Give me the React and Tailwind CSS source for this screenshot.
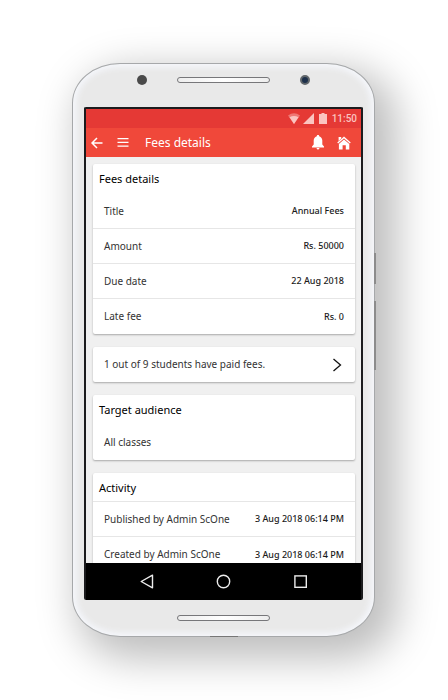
const feeRows = [
  ["Title", "Annual Fees"],
  ["Amount", "Rs. 50000"],
  ["Due date", "22 Aug 2018"],
  ["Late fee", "Rs. 0"],
];

const activityRows = [
  ["Published by Admin ScOne", "3 Aug 2018 06:14 PM"],
  ["Created by Admin ScOne", "3 Aug 2018 06:14 PM"],
];

function Rows({ items }) {
  return (
    <dl>
      {items.map(([label, value]) => (
        <div
          key={label}
          className="flex h-[35px] items-center justify-between border-b border-[#e6e6e6] px-[11px] last:border-b-0"
        >
          <dt className="text-[10px] text-[#333333]">{label}</dt>
          <dd className="text-[9px] font-medium text-[#1a1a1a]">{value}</dd>
        </div>
      ))}
    </dl>
  );
}

function Card({ children }) {
  return (
    <section className="shrink-0 rounded-xs bg-white shadow-[0_1px_2px_rgba(0,0,0,0.3)]">
      {children}
    </section>
  );
}

function CardTitle({ children }) {
  return (
    <h2 className="flex h-[30px] items-center px-[6px] text-[11px] text-black">{children}</h2>
  );
}

function StatusBar() {
  return (
    <div className="flex h-[19px] items-center justify-end gap-[3px] bg-[#e53935] pr-[4px] text-[#fbc4c0]">
      <svg width="12" height="11" viewBox="0 0 12 11" aria-hidden="true">
        <path d="M0 2.500Q6-2 12 2.500L6 11Z" fill="currentColor" opacity=".45" />
        <path d="M1.500 4.200Q6 1.600 10.500 4.200L6 11Z" fill="currentColor" />
      </svg>
      <svg width="11" height="11" viewBox="0 0 11 11" aria-hidden="true">
        <path d="M11 0V11H0Z" fill="currentColor" />
      </svg>
      <svg className="mx-[2px]" width="8" height="11" viewBox="0 0 8 11" aria-hidden="true">
        <path d="M2.500 0h3v1H8v10H0V1h2.500Z" fill="currentColor" />
      </svg>
      <time className="font-['Roboto',sans-serif] text-[10px] font-medium">11:50</time>
    </div>
  );
}

function AppBar() {
  return (
    <header className="flex h-[29px] items-center bg-[#f0483a] pr-[10px] pl-[5px] text-white">
      <button type="button" aria-label="Back">
        <svg width="12" height="12" viewBox="0 0 12 12" fill="none" stroke="currentColor" strokeWidth="1.500">
          <path d="M6 1L1 6L6 11M1 6H11.500" />
        </svg>
      </button>
      <button type="button" aria-label="Menu" className="ml-[14px]">
        <svg width="12" height="9" viewBox="0 0 12 9" fill="currentColor">
          <path d="M.5 0h11v1.200H.5zM.5 3.800h11v1.200H.5zM.5 7.500h11v1.200H.5z" />
        </svg>
      </button>
      <h1 className="ml-[16px] flex-1 text-[12px]">Fees details</h1>
      <button type="button" aria-label="Notifications">
        <svg width="12" height="15" viewBox="0 0 12 15" fill="currentColor">
          <path d="M6 0C6.900 0 7.200.6 7.200 1.200C9.300 1.800 10.300 3.600 10.300 5.500V9.500L12 11.600V12.500H0V11.600L1.700 9.500V5.500C1.700 3.600 2.700 1.800 4.800 1.200C4.800.6 5.100 0 6 0ZM4.500 13H7.500Q7.200 14.500 6 14.500Q4.800 14.500 4.500 13Z" />
        </svg>
      </button>
      <button type="button" aria-label="Home" className="ml-[13px]">
        <svg width="14" height="14" viewBox="0 0 14 14" fill="none">
          <path d="M7 3.400L12.300 8V13.500H8.800V9.300H5.600V13.500H1.900V8Z" fill="currentColor" />
          <path d="M.7 7L7 1.400L13.300 7" stroke="currentColor" strokeWidth="1.300" />
          <path d="M1.600 1H4.200V2.600L1.600 4.900Z" fill="currentColor" />
        </svg>
      </button>
    </header>
  );
}

function NavBar() {
  return (
    <nav className="flex h-[37px] shrink-0 items-center justify-center gap-[62px] bg-black text-[#ececec]">
      <button type="button" aria-label="Back">
        <svg width="15" height="15" viewBox="0 0 15 15" fill="none" stroke="currentColor" strokeWidth="1.400">
          <path d="M13.500 1.200V13.800L2.200 7.500Z" strokeLinejoin="round" />
        </svg>
      </button>
      <button type="button" aria-label="Home">
        <svg width="15" height="15" viewBox="0 0 15 15" fill="none" stroke="currentColor" strokeWidth="1.400">
          <circle cx="7.500" cy="7.500" r="6.200" />
        </svg>
      </button>
      <button type="button" aria-label="Recent apps">
        <svg width="15" height="15" viewBox="0 0 15 15" fill="none" stroke="currentColor" strokeWidth="1.400">
          <rect x="1.900" y="1.900" width="11.400" height="11.400" />
        </svg>
      </button>
    </nav>
  );
}

function Speaker() {
  return (
    <div className="h-[6px] w-[93px] rounded-full border border-[#77777a] bg-linear-to-r from-[#eeeeee] via-white to-[#eeeeee]" />
  );
}

export default function App() {
  return (
    <main className="min-h-screen overflow-hidden bg-white pt-[63px] pr-px pb-[63px] font-['Noto_Sans','Open_Sans',sans-serif]">
      <div className="relative mx-auto w-full max-w-[303px] rounded-[48px/40px] border border-[#a6a8aa] bg-[#e9e9e9] px-[11px] shadow-[inset_0_0_6px_3px_#f6f8fd,14px_14px_40px_8px_rgba(0,0,0,0.26)]">
        <div className="absolute top-[189px] -right-[2px] h-[31px] w-[2px] bg-[#8c8c8c]" />
        <div className="absolute top-[237px] -right-[2px] h-[69px] w-[2px] bg-[#8c8c8c]" />
        <div className="absolute -bottom-px left-1/2 h-px w-[28px] -translate-x-1/2 bg-[#777777]" />

        <div className="flex h-[43px] items-center justify-center gap-[30px] pb-[12px]">
          <div className="size-[10px] rounded-full bg-[#4a4a4a]" />
          <Speaker />
          <div className="size-[10px] rounded-full border-2 border-[#62676b] bg-[#1d304b]" />
        </div>

        <div className="flex h-[493px] flex-col overflow-hidden rounded-xs border-2 border-b-0 border-[#1b1b1d] bg-[#f0f0f0]">
          <StatusBar />
          <AppBar />
          <div className="flex min-h-0 flex-1 flex-col gap-[13px] overflow-hidden pt-[7px] pr-[6px] pl-[7px]">
            <Card>
              <CardTitle>Fees details</CardTitle>
              <Rows items={feeRows} />
            </Card>
            <Card>
              <button
                type="button"
                className="flex h-[35px] w-full items-center justify-between pr-[13px] pl-[11px] text-[10px] text-[#333333]"
              >
                1 out of 9 students have paid fees.
                <svg width="10" height="14" viewBox="0 0 10 14" fill="none" stroke="#111111" strokeWidth="1.300">
                  <path d="M1.500 1L8.500 7L1.500 13" />
                </svg>
              </button>
            </Card>
            <Card>
              <CardTitle>Target audience</CardTitle>
              <p className="flex h-[35px] items-center px-[11px] text-[10px] text-[#333333]">All classes</p>
            </Card>
            <Card>
              <div className="h-[29px] overflow-hidden border-b border-[#e6e6e6]">
                <CardTitle>Activity</CardTitle>
              </div>
              <Rows items={activityRows} />
            </Card>
          </div>
          <NavBar />
        </div>

        <div className="flex h-[36px] items-center justify-center">
          <Speaker />
        </div>
      </div>
    </main>
  );
}
